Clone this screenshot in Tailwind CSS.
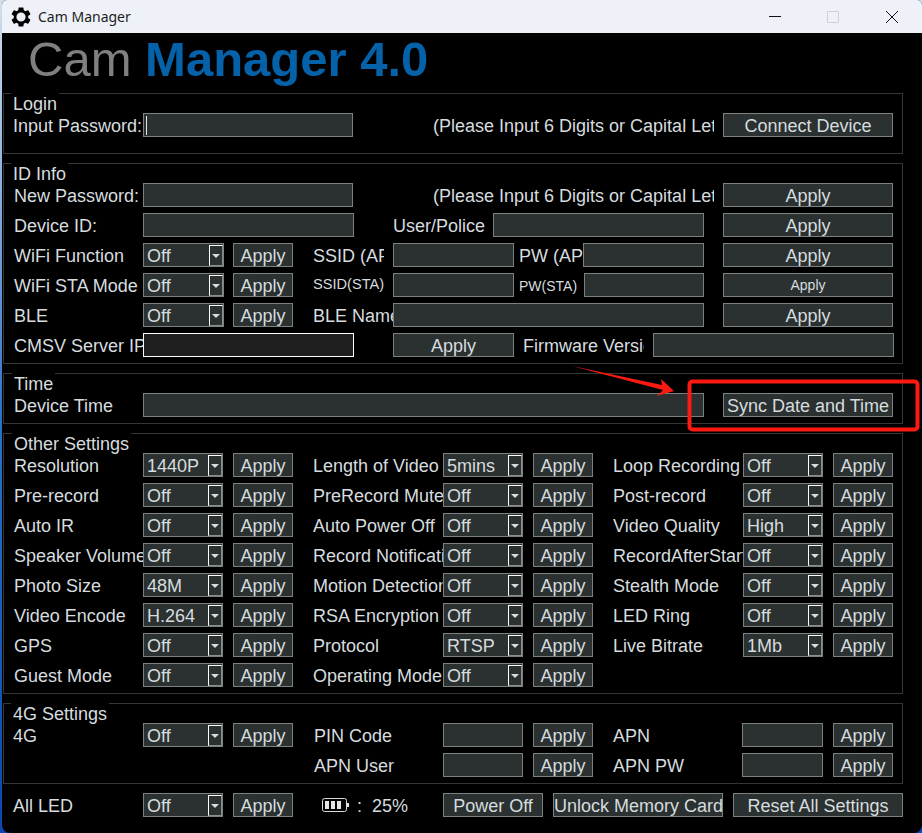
<!DOCTYPE html>
<html lang="en">
<head>
    <meta charset="UTF-8">
    <title>Cam Manager</title>
    <script src="https://cdn.jsdelivr.net/npm/@tailwindcss/browser@4"></script>
</head>
<body class="relative h-[833px] w-[922px] overflow-hidden bg-linear-to-b from-[#d3deea] via-[#2a72c8] to-[#0b46b0] font-['Liberation_Sans',Arial,sans-serif] text-[18px] leading-[26px] text-[#d6dcdf]">
<div class="ml-[2px] h-[833px] w-[920px] overflow-hidden rounded-t-[5px] rounded-b-[8px] bg-black">

    <!-- title bar -->
    <div class="flex h-[33px] items-center bg-[#eef2f8] pr-px font-['Noto_Sans',sans-serif] text-[14px] text-[#1c1c1c]">
        <svg class="ml-[7px] h-6 w-6" viewBox="0 0 24 24"><path fill="#000" fill-rule="evenodd" d="M19.14 12.94c.04-.3.06-.61.06-.94 0-.32-.02-.64-.07-.94l2.03-1.58c.18-.14.23-.41.12-.61l-1.92-3.32c-.12-.22-.37-.29-.59-.22l-2.39.96c-.5-.38-1.03-.7-1.62-.94L14.4 2.81c-.04-.24-.24-.41-.48-.41h-3.84c-.24 0-.43.17-.47.41L9.25 5.35c-.59.24-1.13.57-1.62.94l-2.39-.96c-.22-.08-.47 0-.59.22L2.74 8.87c-.12.21-.08.47.12.61l2.03 1.58c-.05.3-.09.63-.09.94s.02.64.07.94l-2.03 1.58c-.18.14-.23.41-.12.61l1.92 3.32c.12.22.37.29.59.22l2.39-.96c.5.38 1.03.7 1.62.94l.36 2.54c.05.24.24.41.48.41h3.84c.24 0 .44-.17.47-.41l.36-2.54c.59-.24 1.13-.56 1.62-.94l2.39.96c.22.08.47 0 .59-.22l1.92-3.32c.12-.22.07-.47-.12-.61l-2.01-1.58zM12 16.6A4.6 4.6 0 1 1 12 7.4a4.6 4.6 0 0 1 0 9.2z"/></svg>
        <span class="ml-[5px]">Cam Manager</span>
        <div class="ml-auto flex">
            <div class="flex h-[33px] w-[58px] items-center justify-center"><div class="h-px w-3 bg-[#111]"></div></div>
            <div class="flex h-[33px] w-[58px] items-center justify-center"><div class="h-3 w-3 rounded-[1px] border border-[#cdd1d6]"></div></div>
            <div class="flex h-[33px] w-[59px] items-center justify-center">
                <svg class="h-3 w-3" viewBox="0 0 12 12"><path d="M0 0L12 12M12 0L0 12" stroke="#111" stroke-width="1"/></svg>
            </div>
        </div>
    </div>

    <!-- logo -->
    <div class="h-[60px] pl-[26px] text-[49px] leading-[52px]"><span class="text-[#808080]">Cam</span> <span class="font-bold text-[#0561a8]">Manager 4.0</span></div>

    <div class="ml-px flex w-[900px] flex-col gap-[9px]">

        <!-- Login -->
        <div class="relative h-[61px] border border-[#333836] pt-[19px] pl-[9px]">
            <span class="absolute -top-px left-[7px] bg-black px-[2px] leading-[22px]">Login</span>
            <div class="flex h-6">
                <span class="w-[130px] whitespace-nowrap">Input Password:</span>
                <div class="flex h-6 w-[210px] items-center border border-[#7c8180] bg-[#2a3130] pl-[2px]"><div class="h-[19px] w-px bg-[#e5e5e5]"></div></div>
                <span class="ml-[80px] w-[281px] overflow-hidden whitespace-nowrap">(Please Input 6 Digits or Capital Letters)</span>
                <div class="ml-[9px] h-6 w-[170px] border border-[#7c8180] bg-[#2a3130] text-center leading-6">Connect Device</div>
            </div>
        </div>

        <!-- ID Info -->
        <div class="relative h-[201px] border border-[#333836] pt-[19px] pl-[9px]">
            <span class="absolute -top-px left-[7px] bg-black px-[2px] leading-[22px]">ID Info</span>
            <div class="flex flex-col gap-[6px]">
                <div class="flex h-6">
                    <span class="w-[130px] whitespace-nowrap pl-px">New Password:</span>
                    <div class="h-6 w-[210px] border border-[#7c8180] bg-[#2a3130]"></div>
                    <span class="ml-[80px] w-[281px] overflow-hidden whitespace-nowrap">(Please Input 6 Digits or Capital Letters)</span>
                    <div class="ml-[9px] h-6 w-[170px] border border-[#7c8180] bg-[#2a3130] text-center leading-6">Apply</div>
                </div>
                <div class="flex h-6">
                    <span class="w-[130px] whitespace-nowrap pl-px">Device ID:</span>
                    <div class="h-6 w-[211px] border border-[#7c8180] bg-[#2a3130]"></div>
                    <span class="ml-[39px] w-[100px] whitespace-nowrap">User/Police</span>
                    <div class="h-6 w-[211px] border border-[#7c8180] bg-[#2a3130]"></div>
                    <div class="ml-[19px] h-6 w-[170px] border border-[#7c8180] bg-[#2a3130] text-center leading-6">Apply</div>
                </div>
                <div class="flex h-6">
                    <span class="w-[130px] whitespace-nowrap pl-px">WiFi Function</span>
                    <div class="flex h-6 w-[81px] border border-[#7c8180] bg-[#2a3130] pl-[3px] leading-6"><span class="flex-1">Off</span><div class="mt-px flex h-[21px] w-[14px] items-center justify-center border-t border-l border-r border-b border-t-white border-l-white border-r-[#8a8f8e] border-b-[#8a8f8e]"><div class="h-0 w-0 border-x-[4px] border-t-[4px] border-x-transparent border-t-[#d6dcdf]"></div></div></div>
                    <div class="ml-[9px] h-6 w-[60px] border border-[#7c8180] bg-[#2a3130] text-center leading-6">Apply</div>
                    <span class="ml-[20px] w-[71px] overflow-hidden whitespace-nowrap">SSID (APN)</span>
                    <div class="ml-[9px] h-6 w-[121px] border border-[#7c8180] bg-[#2a3130]"></div>
                    <span class="ml-[5px] w-[64px] overflow-hidden whitespace-nowrap">PW (APN)</span>
                    <div class="h-6 w-[121px] border border-[#7c8180] bg-[#2a3130]"></div>
                    <div class="ml-[19px] h-6 w-[170px] border border-[#7c8180] bg-[#2a3130] text-center leading-6">Apply</div>
                </div>
                <div class="flex h-6">
                    <span class="w-[130px] whitespace-nowrap pl-px">WiFi STA Mode</span>
                    <div class="flex h-6 w-[81px] border border-[#7c8180] bg-[#2a3130] pl-[3px] leading-6"><span class="flex-1">Off</span><div class="mt-px flex h-[21px] w-[14px] items-center justify-center border-t border-l border-r border-b border-t-white border-l-white border-r-[#8a8f8e] border-b-[#8a8f8e]"><div class="h-0 w-0 border-x-[4px] border-t-[4px] border-x-transparent border-t-[#d6dcdf]"></div></div></div>
                    <div class="ml-[9px] h-6 w-[60px] border border-[#7c8180] bg-[#2a3130] text-center leading-6">Apply</div>
                    <span class="ml-[20px] w-[71px] overflow-hidden whitespace-nowrap text-[14.6px] leading-[22px]">SSID(STA)</span>
                    <div class="ml-[9px] h-6 w-[121px] border border-[#7c8180] bg-[#2a3130]"></div>
                    <span class="ml-[5px] w-[65px] overflow-hidden whitespace-nowrap text-[14px]">PW(STA)</span>
                    <div class="h-6 w-[120px] border border-[#7c8180] bg-[#2a3130]"></div>
                    <div class="ml-[19px] h-6 w-[170px] border border-[#7c8180] bg-[#2a3130] text-center text-[14px] leading-[22px]">Apply</div>
                </div>
                <div class="flex h-6">
                    <span class="w-[130px] whitespace-nowrap pl-px">BLE</span>
                    <div class="flex h-6 w-[81px] border border-[#7c8180] bg-[#2a3130] pl-[3px] leading-6"><span class="flex-1">Off</span><div class="mt-px flex h-[21px] w-[14px] items-center justify-center border-t border-l border-r border-b border-t-white border-l-white border-r-[#8a8f8e] border-b-[#8a8f8e]"><div class="h-0 w-0 border-x-[4px] border-t-[4px] border-x-transparent border-t-[#d6dcdf]"></div></div></div>
                    <div class="ml-[9px] h-6 w-[60px] border border-[#7c8180] bg-[#2a3130] text-center leading-6">Apply</div>
                    <span class="ml-[20px] w-[80px] overflow-hidden whitespace-nowrap">BLE Name</span>
                    <div class="h-6 w-[311px] border border-[#7c8180] bg-[#2a3130]"></div>
                    <div class="ml-[19px] h-6 w-[170px] border border-[#7c8180] bg-[#2a3130] text-center leading-6">Apply</div>
                </div>
                <div class="flex h-6">
                    <span class="w-[130px] overflow-hidden whitespace-nowrap pl-px">CMSV Server IP</span>
                    <div class="h-6 w-[211px] border border-white bg-[#1f1f1f]"></div>
                    <div class="ml-[39px] h-6 w-[121px] border border-[#7c8180] bg-[#2a3130] text-center leading-6">Apply</div>
                    <span class="ml-[9px] w-[121px] overflow-hidden whitespace-nowrap">Firmware Version</span>
                    <div class="ml-[9px] h-6 w-[241px] border border-[#7c8180] bg-[#2a3130]"></div>
                </div>
            </div>
        </div>

        <!-- Time -->
        <div class="relative h-[51px] border border-[#333836] pt-[19px] pl-[9px]">
            <span class="absolute -top-px left-[8px] bg-black px-[2px] leading-[22px]">Time</span>
            <div class="flex h-6">
                <span class="w-[130px] whitespace-nowrap pl-px">Device Time</span>
                <div class="h-6 w-[561px] border border-[#7c8180] bg-[#2a3130]"></div>
                <div class="ml-[19px] h-6 w-[170px] border border-[#7c8180] bg-[#2a3130] text-center leading-6">Sync Date and Time</div>
            </div>
        </div>

        <!-- Other Settings -->
        <div class="relative h-[261px] border border-[#333836] pt-[19px] pl-[9px]">
            <span class="absolute -top-px left-[8px] bg-black px-[2px] leading-[22px]">Other Settings</span>
            <div class="flex flex-col gap-[6px]">
                <div class="flex h-6">
                    <span class="w-[130px] overflow-hidden whitespace-nowrap pl-px">Resolution</span>
                    <div class="flex h-6 w-[80px] border border-[#7c8180] bg-[#2a3130] pl-[3px] leading-6"><span class="flex-1">1440P</span><div class="mt-px flex h-[21px] w-[14px] items-center justify-center border-t border-l border-r border-b border-t-white border-l-white border-r-[#8a8f8e] border-b-[#8a8f8e]"><div class="h-0 w-0 border-x-[4px] border-t-[4px] border-x-transparent border-t-[#d6dcdf]"></div></div></div>
                    <div class="ml-[10px] h-6 w-[60px] border border-[#7c8180] bg-[#2a3130] text-center leading-6">Apply</div>
                    <span class="ml-[20px] w-[130px] overflow-hidden whitespace-nowrap">Length of Video</span>
                    <div class="flex h-6 w-[80px] border border-[#7c8180] bg-[#2a3130] pl-[3px] leading-6"><span class="flex-1">5mins</span><div class="mt-px flex h-[21px] w-[14px] items-center justify-center border-t border-l border-r border-b border-t-white border-l-white border-r-[#8a8f8e] border-b-[#8a8f8e]"><div class="h-0 w-0 border-x-[4px] border-t-[4px] border-x-transparent border-t-[#d6dcdf]"></div></div></div>
                    <div class="ml-[10px] h-6 w-[60px] border border-[#7c8180] bg-[#2a3130] text-center leading-6">Apply</div>
                    <span class="ml-[20px] w-[130px] overflow-hidden whitespace-nowrap">Loop Recording</span>
                    <div class="flex h-6 w-[80px] border border-[#7c8180] bg-[#2a3130] pl-[3px] leading-6"><span class="flex-1">Off</span><div class="mt-px flex h-[21px] w-[14px] items-center justify-center border-t border-l border-r border-b border-t-white border-l-white border-r-[#8a8f8e] border-b-[#8a8f8e]"><div class="h-0 w-0 border-x-[4px] border-t-[4px] border-x-transparent border-t-[#d6dcdf]"></div></div></div>
                    <div class="ml-[10px] h-6 w-[60px] border border-[#7c8180] bg-[#2a3130] text-center leading-6">Apply</div>
                </div>
                <div class="flex h-6">
                    <span class="w-[130px] overflow-hidden whitespace-nowrap pl-px">Pre-record</span>
                    <div class="flex h-6 w-[80px] border border-[#7c8180] bg-[#2a3130] pl-[3px] leading-6"><span class="flex-1">Off</span><div class="mt-px flex h-[21px] w-[14px] items-center justify-center border-t border-l border-r border-b border-t-white border-l-white border-r-[#8a8f8e] border-b-[#8a8f8e]"><div class="h-0 w-0 border-x-[4px] border-t-[4px] border-x-transparent border-t-[#d6dcdf]"></div></div></div>
                    <div class="ml-[10px] h-6 w-[60px] border border-[#7c8180] bg-[#2a3130] text-center leading-6">Apply</div>
                    <span class="ml-[20px] w-[130px] overflow-hidden whitespace-nowrap">PreRecord Mute</span>
                    <div class="flex h-6 w-[80px] border border-[#7c8180] bg-[#2a3130] pl-[3px] leading-6"><span class="flex-1">Off</span><div class="mt-px flex h-[21px] w-[14px] items-center justify-center border-t border-l border-r border-b border-t-white border-l-white border-r-[#8a8f8e] border-b-[#8a8f8e]"><div class="h-0 w-0 border-x-[4px] border-t-[4px] border-x-transparent border-t-[#d6dcdf]"></div></div></div>
                    <div class="ml-[10px] h-6 w-[60px] border border-[#7c8180] bg-[#2a3130] text-center leading-6">Apply</div>
                    <span class="ml-[20px] w-[130px] overflow-hidden whitespace-nowrap">Post-record</span>
                    <div class="flex h-6 w-[80px] border border-[#7c8180] bg-[#2a3130] pl-[3px] leading-6"><span class="flex-1">Off</span><div class="mt-px flex h-[21px] w-[14px] items-center justify-center border-t border-l border-r border-b border-t-white border-l-white border-r-[#8a8f8e] border-b-[#8a8f8e]"><div class="h-0 w-0 border-x-[4px] border-t-[4px] border-x-transparent border-t-[#d6dcdf]"></div></div></div>
                    <div class="ml-[10px] h-6 w-[60px] border border-[#7c8180] bg-[#2a3130] text-center leading-6">Apply</div>
                </div>
                <div class="flex h-6">
                    <span class="w-[130px] overflow-hidden whitespace-nowrap pl-px">Auto IR</span>
                    <div class="flex h-6 w-[80px] border border-[#7c8180] bg-[#2a3130] pl-[3px] leading-6"><span class="flex-1">Off</span><div class="mt-px flex h-[21px] w-[14px] items-center justify-center border-t border-l border-r border-b border-t-white border-l-white border-r-[#8a8f8e] border-b-[#8a8f8e]"><div class="h-0 w-0 border-x-[4px] border-t-[4px] border-x-transparent border-t-[#d6dcdf]"></div></div></div>
                    <div class="ml-[10px] h-6 w-[60px] border border-[#7c8180] bg-[#2a3130] text-center leading-6">Apply</div>
                    <span class="ml-[20px] w-[130px] overflow-hidden whitespace-nowrap">Auto Power Off</span>
                    <div class="flex h-6 w-[80px] border border-[#7c8180] bg-[#2a3130] pl-[3px] leading-6"><span class="flex-1">Off</span><div class="mt-px flex h-[21px] w-[14px] items-center justify-center border-t border-l border-r border-b border-t-white border-l-white border-r-[#8a8f8e] border-b-[#8a8f8e]"><div class="h-0 w-0 border-x-[4px] border-t-[4px] border-x-transparent border-t-[#d6dcdf]"></div></div></div>
                    <div class="ml-[10px] h-6 w-[60px] border border-[#7c8180] bg-[#2a3130] text-center leading-6">Apply</div>
                    <span class="ml-[20px] w-[130px] overflow-hidden whitespace-nowrap">Video Quality</span>
                    <div class="flex h-6 w-[80px] border border-[#7c8180] bg-[#2a3130] pl-[3px] leading-6"><span class="flex-1">High</span><div class="mt-px flex h-[21px] w-[14px] items-center justify-center border-t border-l border-r border-b border-t-white border-l-white border-r-[#8a8f8e] border-b-[#8a8f8e]"><div class="h-0 w-0 border-x-[4px] border-t-[4px] border-x-transparent border-t-[#d6dcdf]"></div></div></div>
                    <div class="ml-[10px] h-6 w-[60px] border border-[#7c8180] bg-[#2a3130] text-center leading-6">Apply</div>
                </div>
                <div class="flex h-6">
                    <span class="w-[130px] overflow-hidden whitespace-nowrap pl-px">Speaker Volume</span>
                    <div class="flex h-6 w-[80px] border border-[#7c8180] bg-[#2a3130] pl-[3px] leading-6"><span class="flex-1">Off</span><div class="mt-px flex h-[21px] w-[14px] items-center justify-center border-t border-l border-r border-b border-t-white border-l-white border-r-[#8a8f8e] border-b-[#8a8f8e]"><div class="h-0 w-0 border-x-[4px] border-t-[4px] border-x-transparent border-t-[#d6dcdf]"></div></div></div>
                    <div class="ml-[10px] h-6 w-[60px] border border-[#7c8180] bg-[#2a3130] text-center leading-6">Apply</div>
                    <span class="ml-[20px] w-[130px] overflow-hidden whitespace-nowrap">Record Notification</span>
                    <div class="flex h-6 w-[80px] border border-[#7c8180] bg-[#2a3130] pl-[3px] leading-6"><span class="flex-1">Off</span><div class="mt-px flex h-[21px] w-[14px] items-center justify-center border-t border-l border-r border-b border-t-white border-l-white border-r-[#8a8f8e] border-b-[#8a8f8e]"><div class="h-0 w-0 border-x-[4px] border-t-[4px] border-x-transparent border-t-[#d6dcdf]"></div></div></div>
                    <div class="ml-[10px] h-6 w-[60px] border border-[#7c8180] bg-[#2a3130] text-center leading-6">Apply</div>
                    <span class="ml-[20px] w-[130px] overflow-hidden whitespace-nowrap">RecordAfterStart</span>
                    <div class="flex h-6 w-[80px] border border-[#7c8180] bg-[#2a3130] pl-[3px] leading-6"><span class="flex-1">Off</span><div class="mt-px flex h-[21px] w-[14px] items-center justify-center border-t border-l border-r border-b border-t-white border-l-white border-r-[#8a8f8e] border-b-[#8a8f8e]"><div class="h-0 w-0 border-x-[4px] border-t-[4px] border-x-transparent border-t-[#d6dcdf]"></div></div></div>
                    <div class="ml-[10px] h-6 w-[60px] border border-[#7c8180] bg-[#2a3130] text-center leading-6">Apply</div>
                </div>
                <div class="flex h-6">
                    <span class="w-[130px] overflow-hidden whitespace-nowrap pl-px">Photo Size</span>
                    <div class="flex h-6 w-[80px] border border-[#7c8180] bg-[#2a3130] pl-[3px] leading-6"><span class="flex-1">48M</span><div class="mt-px flex h-[21px] w-[14px] items-center justify-center border-t border-l border-r border-b border-t-white border-l-white border-r-[#8a8f8e] border-b-[#8a8f8e]"><div class="h-0 w-0 border-x-[4px] border-t-[4px] border-x-transparent border-t-[#d6dcdf]"></div></div></div>
                    <div class="ml-[10px] h-6 w-[60px] border border-[#7c8180] bg-[#2a3130] text-center leading-6">Apply</div>
                    <span class="ml-[20px] w-[130px] overflow-hidden whitespace-nowrap">Motion Detection</span>
                    <div class="flex h-6 w-[80px] border border-[#7c8180] bg-[#2a3130] pl-[3px] leading-6"><span class="flex-1">Off</span><div class="mt-px flex h-[21px] w-[14px] items-center justify-center border-t border-l border-r border-b border-t-white border-l-white border-r-[#8a8f8e] border-b-[#8a8f8e]"><div class="h-0 w-0 border-x-[4px] border-t-[4px] border-x-transparent border-t-[#d6dcdf]"></div></div></div>
                    <div class="ml-[10px] h-6 w-[60px] border border-[#7c8180] bg-[#2a3130] text-center leading-6">Apply</div>
                    <span class="ml-[20px] w-[130px] overflow-hidden whitespace-nowrap">Stealth Mode</span>
                    <div class="flex h-6 w-[80px] border border-[#7c8180] bg-[#2a3130] pl-[3px] leading-6"><span class="flex-1">Off</span><div class="mt-px flex h-[21px] w-[14px] items-center justify-center border-t border-l border-r border-b border-t-white border-l-white border-r-[#8a8f8e] border-b-[#8a8f8e]"><div class="h-0 w-0 border-x-[4px] border-t-[4px] border-x-transparent border-t-[#d6dcdf]"></div></div></div>
                    <div class="ml-[10px] h-6 w-[60px] border border-[#7c8180] bg-[#2a3130] text-center leading-6">Apply</div>
                </div>
                <div class="flex h-6">
                    <span class="w-[130px] overflow-hidden whitespace-nowrap pl-px">Video Encode</span>
                    <div class="flex h-6 w-[80px] border border-[#7c8180] bg-[#2a3130] pl-[3px] leading-6"><span class="flex-1">H.264</span><div class="mt-px flex h-[21px] w-[14px] items-center justify-center border-t border-l border-r border-b border-t-white border-l-white border-r-[#8a8f8e] border-b-[#8a8f8e]"><div class="h-0 w-0 border-x-[4px] border-t-[4px] border-x-transparent border-t-[#d6dcdf]"></div></div></div>
                    <div class="ml-[10px] h-6 w-[60px] border border-[#7c8180] bg-[#2a3130] text-center leading-6">Apply</div>
                    <span class="ml-[20px] w-[130px] overflow-hidden whitespace-nowrap">RSA Encryption</span>
                    <div class="flex h-6 w-[80px] border border-[#7c8180] bg-[#2a3130] pl-[3px] leading-6"><span class="flex-1">Off</span><div class="mt-px flex h-[21px] w-[14px] items-center justify-center border-t border-l border-r border-b border-t-white border-l-white border-r-[#8a8f8e] border-b-[#8a8f8e]"><div class="h-0 w-0 border-x-[4px] border-t-[4px] border-x-transparent border-t-[#d6dcdf]"></div></div></div>
                    <div class="ml-[10px] h-6 w-[60px] border border-[#7c8180] bg-[#2a3130] text-center leading-6">Apply</div>
                    <span class="ml-[20px] w-[130px] overflow-hidden whitespace-nowrap">LED Ring</span>
                    <div class="flex h-6 w-[80px] border border-[#7c8180] bg-[#2a3130] pl-[3px] leading-6"><span class="flex-1">Off</span><div class="mt-px flex h-[21px] w-[14px] items-center justify-center border-t border-l border-r border-b border-t-white border-l-white border-r-[#8a8f8e] border-b-[#8a8f8e]"><div class="h-0 w-0 border-x-[4px] border-t-[4px] border-x-transparent border-t-[#d6dcdf]"></div></div></div>
                    <div class="ml-[10px] h-6 w-[60px] border border-[#7c8180] bg-[#2a3130] text-center leading-6">Apply</div>
                </div>
                <div class="flex h-6">
                    <span class="w-[130px] overflow-hidden whitespace-nowrap pl-px">GPS</span>
                    <div class="flex h-6 w-[80px] border border-[#7c8180] bg-[#2a3130] pl-[3px] leading-6"><span class="flex-1">Off</span><div class="mt-px flex h-[21px] w-[14px] items-center justify-center border-t border-l border-r border-b border-t-white border-l-white border-r-[#8a8f8e] border-b-[#8a8f8e]"><div class="h-0 w-0 border-x-[4px] border-t-[4px] border-x-transparent border-t-[#d6dcdf]"></div></div></div>
                    <div class="ml-[10px] h-6 w-[60px] border border-[#7c8180] bg-[#2a3130] text-center leading-6">Apply</div>
                    <span class="ml-[20px] w-[130px] overflow-hidden whitespace-nowrap">Protocol</span>
                    <div class="flex h-6 w-[80px] border border-[#7c8180] bg-[#2a3130] pl-[3px] leading-6"><span class="flex-1">RTSP</span><div class="mt-px flex h-[21px] w-[14px] items-center justify-center border-t border-l border-r border-b border-t-white border-l-white border-r-[#8a8f8e] border-b-[#8a8f8e]"><div class="h-0 w-0 border-x-[4px] border-t-[4px] border-x-transparent border-t-[#d6dcdf]"></div></div></div>
                    <div class="ml-[10px] h-6 w-[60px] border border-[#7c8180] bg-[#2a3130] text-center leading-6">Apply</div>
                    <span class="ml-[20px] w-[130px] overflow-hidden whitespace-nowrap">Live Bitrate</span>
                    <div class="flex h-6 w-[80px] border border-[#7c8180] bg-[#2a3130] pl-[3px] leading-6"><span class="flex-1">1Mb</span><div class="mt-px flex h-[21px] w-[14px] items-center justify-center border-t border-l border-r border-b border-t-white border-l-white border-r-[#8a8f8e] border-b-[#8a8f8e]"><div class="h-0 w-0 border-x-[4px] border-t-[4px] border-x-transparent border-t-[#d6dcdf]"></div></div></div>
                    <div class="ml-[10px] h-6 w-[60px] border border-[#7c8180] bg-[#2a3130] text-center leading-6">Apply</div>
                </div>
                <div class="flex h-6">
                    <span class="w-[130px] overflow-hidden whitespace-nowrap pl-px">Guest Mode</span>
                    <div class="flex h-6 w-[80px] border border-[#7c8180] bg-[#2a3130] pl-[3px] leading-6"><span class="flex-1">Off</span><div class="mt-px flex h-[21px] w-[14px] items-center justify-center border-t border-l border-r border-b border-t-white border-l-white border-r-[#8a8f8e] border-b-[#8a8f8e]"><div class="h-0 w-0 border-x-[4px] border-t-[4px] border-x-transparent border-t-[#d6dcdf]"></div></div></div>
                    <div class="ml-[10px] h-6 w-[60px] border border-[#7c8180] bg-[#2a3130] text-center leading-6">Apply</div>
                    <span class="ml-[20px] w-[130px] overflow-hidden whitespace-nowrap">Operating Mode</span>
                    <div class="flex h-6 w-[80px] border border-[#7c8180] bg-[#2a3130] pl-[3px] leading-6"><span class="flex-1">Off</span><div class="mt-px flex h-[21px] w-[14px] items-center justify-center border-t border-l border-r border-b border-t-white border-l-white border-r-[#8a8f8e] border-b-[#8a8f8e]"><div class="h-0 w-0 border-x-[4px] border-t-[4px] border-x-transparent border-t-[#d6dcdf]"></div></div></div>
                    <div class="ml-[10px] h-6 w-[60px] border border-[#7c8180] bg-[#2a3130] text-center leading-6">Apply</div>
                </div>
            </div>
        </div>

        <!-- 4G Settings -->
        <div class="relative h-[81px] border border-[#333836] pt-[19px] pl-[9px]">
            <span class="absolute -top-px left-[7px] bg-black px-[2px] leading-[22px]">4G Settings</span>
            <div class="flex flex-col gap-[6px]">
                <div class="flex h-6">
                    <span class="w-[130px] whitespace-nowrap">4G</span>
                    <div class="flex h-6 w-[80px] border border-[#7c8180] bg-[#2a3130] pl-[3px] leading-6"><span class="flex-1">Off</span><div class="mt-px flex h-[21px] w-[14px] items-center justify-center border-t border-l border-r border-b border-t-white border-l-white border-r-[#8a8f8e] border-b-[#8a8f8e]"><div class="h-0 w-0 border-x-[4px] border-t-[4px] border-x-transparent border-t-[#d6dcdf]"></div></div></div>
                    <div class="ml-[10px] h-6 w-[60px] border border-[#7c8180] bg-[#2a3130] text-center leading-6">Apply</div>
                    <span class="ml-[21px] w-[129px] whitespace-nowrap">PIN Code</span>
                    <div class="h-6 w-[80px] border border-[#7c8180] bg-[#2a3130]"></div>
                    <div class="ml-[10px] h-6 w-[60px] border border-[#7c8180] bg-[#2a3130] text-center leading-6">Apply</div>
                    <span class="ml-[20px] w-[129px] whitespace-nowrap">APN</span>
                    <div class="h-6 w-[81px] border border-[#7c8180] bg-[#2a3130]"></div>
                    <div class="ml-[10px] h-6 w-[60px] border border-[#7c8180] bg-[#2a3130] text-center leading-6">Apply</div>
                </div>
                <div class="flex h-6">
                    <span class="ml-[301px] w-[129px] whitespace-nowrap">APN User</span>
                    <div class="h-6 w-[80px] border border-[#7c8180] bg-[#2a3130]"></div>
                    <div class="ml-[10px] h-6 w-[60px] border border-[#7c8180] bg-[#2a3130] text-center leading-6">Apply</div>
                    <span class="ml-[20px] w-[129px] whitespace-nowrap">APN PW</span>
                    <div class="h-6 w-[81px] border border-[#7c8180] bg-[#2a3130]"></div>
                    <div class="ml-[10px] h-6 w-[60px] border border-[#7c8180] bg-[#2a3130] text-center leading-6">Apply</div>
                </div>
            </div>
        </div>

        <!-- bottom row -->
        <div class="flex h-6 pl-[10px]">
            <span class="w-[130px] whitespace-nowrap">All LED</span>
            <div class="flex h-6 w-[80px] border border-[#7c8180] bg-[#2a3130] pl-[3px] leading-6"><span class="flex-1">Off</span><div class="mt-px flex h-[21px] w-[14px] items-center justify-center border-t border-l border-r border-b border-t-white border-l-white border-r-[#8a8f8e] border-b-[#8a8f8e]"><div class="h-0 w-0 border-x-[4px] border-t-[4px] border-x-transparent border-t-[#d6dcdf]"></div></div></div>
            <div class="ml-[10px] h-6 w-[60px] border border-[#7c8180] bg-[#2a3130] text-center leading-6">Apply</div>
            <svg class="mt-[5px] ml-[29px] h-[15px] w-[28px]" viewBox="0 0 28 15">
                <rect x="0.5" y="0.5" width="24" height="13" rx="2" fill="none" stroke="#d6dcdf"/>
                <path d="M3 3h4v8H3zM9 3h4v8H9zM15 3h4v8h-4zM25 5h2v4h-2z" fill="#e5e5e5"/>
            </svg>
            <span class="ml-[7px] w-[15px] whitespace-nowrap">:</span>
            <span class="w-[71px] whitespace-nowrap">25%</span>
            <div class="h-6 w-[100px] border border-[#7c8180] bg-[#2a3130] text-center leading-6">Power Off</div>
            <div class="ml-[10px] h-6 w-[170px] whitespace-nowrap border border-[#7c8180] bg-[#2a3130] text-center leading-6">Unlock Memory Card</div>
            <div class="ml-[10px] h-6 w-[170px] border border-[#7c8180] bg-[#2a3130] text-center leading-6">Reset All Settings</div>
        </div>
    </div>
</div>

<!-- red annotation drawn on top of the screenshot -->
<svg class="pointer-events-none absolute top-0 left-0 h-[833px] w-[922px]" viewBox="0 0 922 833">
    <polygon points="572,366 662,385 661,379 674,391 657,396 663,390" fill="#fb1a12"/>
    <rect x="689.5" y="381.5" width="228" height="48" rx="3" fill="none" stroke="#fb1a12" stroke-width="4"/>
</svg>
</body>
</html>
